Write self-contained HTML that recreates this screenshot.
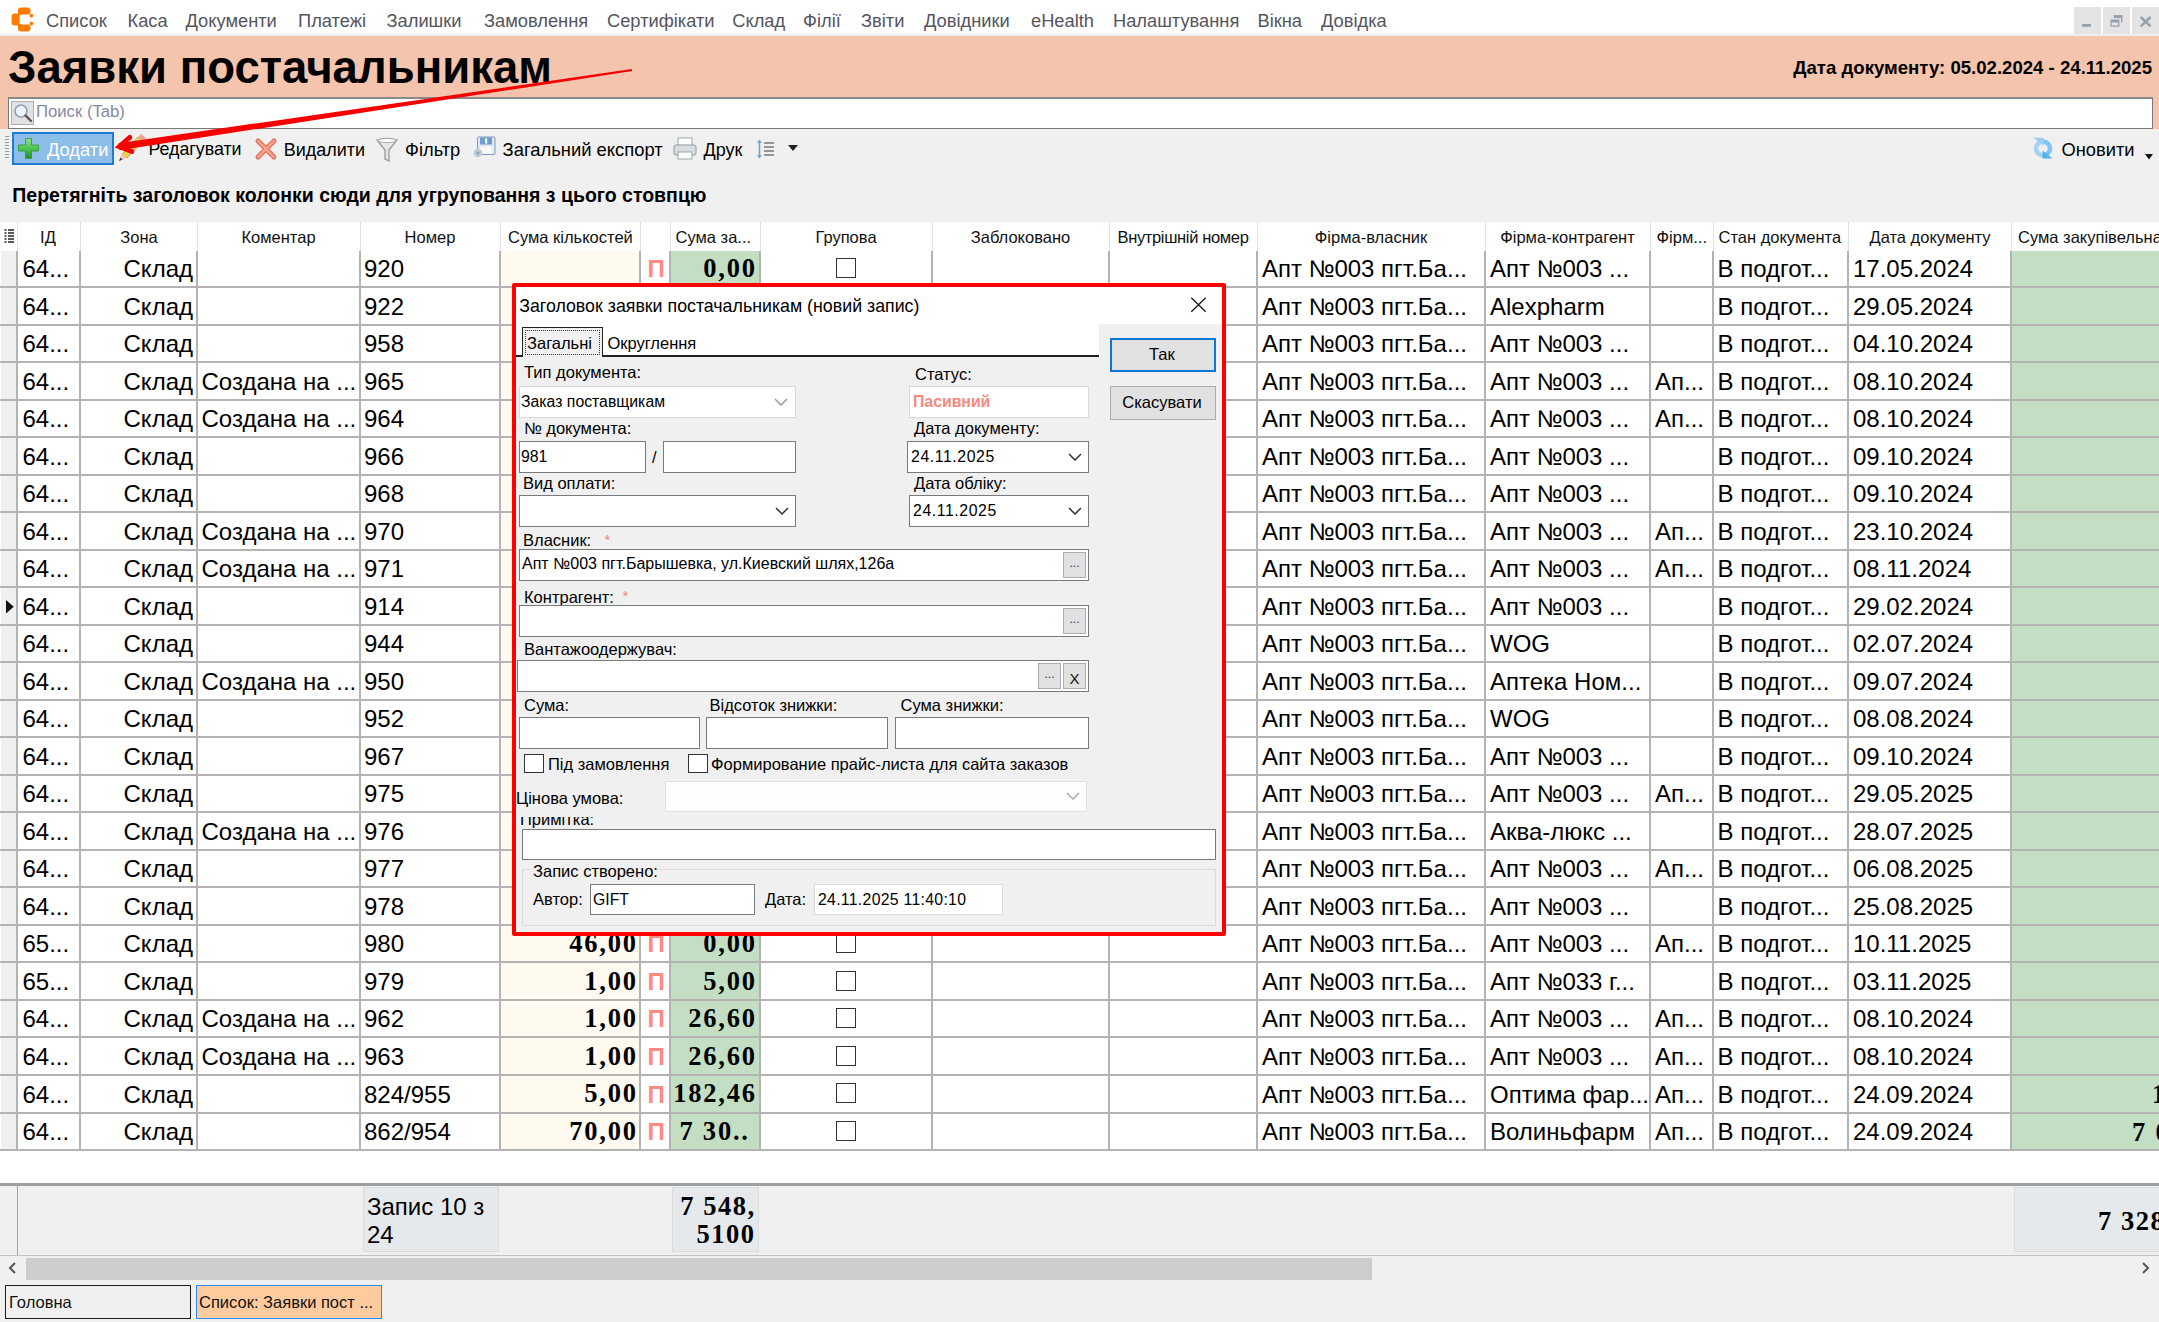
<!DOCTYPE html><html><head><meta charset="utf-8"><style>
html,body{margin:0;padding:0;}
body{width:2159px;height:1322px;overflow:hidden;position:relative;background:#f0f0f0;font-family:"Liberation Sans",sans-serif;}
.t{position:absolute;white-space:pre;}
.b{position:absolute;box-sizing:border-box;}
svg{position:absolute;}
</style></head><body>
<div class="b" style="left:0px;top:0px;width:2159px;height:34px;background:#fff;"></div>
<div class="b" style="left:0px;top:33px;width:2159px;height:3px;background:linear-gradient(#f6f6f6,#ececec);"></div>
<svg style="left:0px;top:0px" width="40" height="40" viewBox="0 0 40 40">
<rect x="18" y="7.5" width="12.5" height="7" rx="3" fill="#ff7c00"/>
<rect x="11.6" y="13.5" width="8" height="12" rx="3" fill="#ff7c00"/>
<rect x="18" y="24.5" width="12.5" height="7" rx="3" fill="#ff7c00"/>
<rect x="18" y="12" width="3" height="3" fill="#ff7c00"/>
<rect x="18" y="24" width="3" height="3" fill="#ff7c00"/>
<rect x="29.5" y="13.8" width="3.6" height="3.6" rx="1.4" fill="#ff7c00"/>
<rect x="29.5" y="21.8" width="3.6" height="3.6" rx="1.4" fill="#ff7c00"/>
</svg>
<div class="t" style="top:11.81px;font-size:18.3px;line-height:18.3px;color:#55555e;left:46px;">Список</div>
<div class="t" style="top:11.81px;font-size:18.3px;line-height:18.3px;color:#55555e;left:127.5px;">Каса</div>
<div class="t" style="top:11.81px;font-size:18.3px;line-height:18.3px;color:#55555e;left:185.5px;">Документи</div>
<div class="t" style="top:11.81px;font-size:18.3px;line-height:18.3px;color:#55555e;left:298px;">Платежі</div>
<div class="t" style="top:11.81px;font-size:18.3px;line-height:18.3px;color:#55555e;left:386.5px;">Залишки</div>
<div class="t" style="top:11.81px;font-size:18.3px;line-height:18.3px;color:#55555e;left:484px;">Замовлення</div>
<div class="t" style="top:11.81px;font-size:18.3px;line-height:18.3px;color:#55555e;left:607px;">Сертифікати</div>
<div class="t" style="top:11.81px;font-size:18.3px;line-height:18.3px;color:#55555e;left:732.3px;">Склад</div>
<div class="t" style="top:11.81px;font-size:18.3px;line-height:18.3px;color:#55555e;left:803px;">Філії</div>
<div class="t" style="top:11.81px;font-size:18.3px;line-height:18.3px;color:#55555e;left:861px;">Звіти</div>
<div class="t" style="top:11.81px;font-size:18.3px;line-height:18.3px;color:#55555e;left:924px;">Довідники</div>
<div class="t" style="top:11.81px;font-size:18.3px;line-height:18.3px;color:#55555e;left:1031px;">eHealth</div>
<div class="t" style="top:11.81px;font-size:18.3px;line-height:18.3px;color:#55555e;left:1113px;">Налаштування</div>
<div class="t" style="top:11.81px;font-size:18.3px;line-height:18.3px;color:#55555e;left:1257.5px;">Вікна</div>
<div class="t" style="top:11.81px;font-size:18.3px;line-height:18.3px;color:#55555e;left:1321px;">Довідка</div>
<div class="b" style="left:2074px;top:7px;width:27px;height:27px;background:#e4e4e4;"></div>
<div class="b" style="left:2103px;top:7px;width:27px;height:27px;background:#e4e4e4;"></div>
<div class="b" style="left:2132px;top:7px;width:27px;height:27px;background:#e4e4e4;"></div>
<svg style="left:2074px;top:7px" width="85" height="27" viewBox="0 0 85 27">
<rect x="8" y="17" width="9" height="2.8" fill="#94a3b0"/>
<rect x="39.7" y="8.1" width="8.7" height="3" fill="#94a3b0"/>
<rect x="47" y="8.1" width="1.4" height="7.4" fill="#94a3b0"/>
<rect x="36.5" y="12.5" width="8.9" height="7.3" fill="#94a3b0"/>
<rect x="37.8" y="15.5" width="6.3" height="3" fill="#e4e4e4"/>
<path d="M67.5 10.7 L75.8 18.6 M75.8 10.7 L67.5 18.6" stroke="#94a3b0" stroke-width="2.6" stroke-linecap="round"/>
</svg>
<div class="b" style="left:0px;top:36px;width:2159px;height:93px;background:#f5c4ac;"></div>
<div class="t" style="top:45.23px;font-size:45.5px;line-height:45.5px;color:#000;font-weight:bold;left:8px;">Заявки постачальникам</div>
<div class="t" style="top:59.16px;font-size:18.6px;line-height:18.6px;color:#000;font-weight:bold;left:1152px;width:1000px;text-align:right;">Дата документу: 05.02.2024 - 24.11.2025</div>
<div class="b" style="left:8px;top:97px;width:2145px;height:32px;background:#fff;border:1px solid #7a7a7a;border-top:2px solid #8a8a8a;"></div>
<div class="b" style="left:11px;top:101px;width:23px;height:24px;background:#e2e2e2;border:1px solid #adadad;"></div>
<svg style="left:12px;top:102px" width="22" height="22" viewBox="0 0 22 22">
<circle cx="9" cy="9" r="6" fill="#eef4fb" stroke="#8aa0b8" stroke-width="1.6"/>
<path d="M13.5 13.5 L19 19" stroke="#555" stroke-width="2.4" stroke-linecap="round"/>
</svg>
<div class="t" style="top:104.36px;font-size:16.7px;line-height:16.7px;color:#8688a0;left:36px;">Поиск (Tab)</div>
<div class="b" style="left:0px;top:129px;width:2159px;height:80px;background:#f0f0f0;"></div>
<div class="b" style="left:5px;top:136px;width:4px;height:24px;background:repeating-linear-gradient(#9a9a9a 0 1px,transparent 1px 3px);"></div>
<div class="b" style="left:12px;top:132px;width:102px;height:33px;background:#8dbde9;border:2px solid #1c7cd6;"></div>
<svg style="left:17px;top:137px" width="24" height="24" viewBox="0 0 24 24">
<defs><linearGradient id="pg" x1="0" y1="0" x2="0" y2="1"><stop offset="0" stop-color="#8fe08f"/><stop offset="0.55" stop-color="#4cbf4c"/><stop offset="1" stop-color="#1d8a1d"/></linearGradient></defs>
<path d="M8.5 1.5 H14.5 V8 H21.5 V14 H14.5 V21.5 H8.5 V14 H1.5 V8 H8.5 Z" fill="url(#pg)" stroke="#2a9a2a" stroke-width="0.8" stroke-linejoin="round"/>
</svg>
<div class="t" style="top:141.01px;font-size:18.3px;line-height:18.3px;color:#fff;left:47px;">Додати</div>
<svg style="left:112px;top:127.5px" width="34" height="36" viewBox="0 0 34 36">
<path d="M10 26 L26 9 L31 13 L15 30 Z" fill="#f0cf4a" stroke="#c8a030" stroke-width="0.8"/>
<path d="M26 9 L29 6 L34 10 L31 13 Z" fill="#f3a0a0"/>
<path d="M10 26 L15 30 L7 33 Z" fill="#f6c8b0"/>
<path d="M7 33 L8.5 29.5 L10.5 31.5 Z" fill="#333"/>
</svg>
<div class="t" style="top:141.43px;font-size:17.8px;line-height:17.8px;color:#000;left:148.5px;">Редагувати</div>
<svg style="left:254px;top:137px" width="24" height="24" viewBox="0 0 24 24">
<path d="M4 4 L20 20 M20 4 L4 20" stroke="#e3705a" stroke-width="5" stroke-linecap="round"/>
<path d="M4 4 L20 20 M20 4 L4 20" stroke="#f7a08c" stroke-width="2.5" stroke-linecap="round"/>
</svg>
<div class="t" style="top:141.26px;font-size:18px;line-height:18px;color:#000;left:283.7px;">Видалити</div>
<svg style="left:375px;top:137px" width="24" height="26" viewBox="0 0 24 26">
<path d="M2 3 Q12 0 22 3 L14 13 V24 L10 22 V13 Z" fill="#e6e6e6" stroke="#9a9a9a" stroke-width="1.3"/>
<ellipse cx="12" cy="3.5" rx="9" ry="2" fill="#fff" stroke="#aaa" stroke-width="1"/>
</svg>
<div class="t" style="top:141.01px;font-size:18.3px;line-height:18.3px;color:#000;left:405px;">Фільтр</div>
<svg style="left:472px;top:135px" width="26" height="26" viewBox="0 0 26 26">
<rect x="5.5" y="2" width="17.5" height="17.5" rx="1" fill="#dfe8f0" stroke="#7e9cc0" stroke-width="1"/>
<rect x="8" y="2.5" width="12" height="7" fill="#6f9bd0"/>
<rect x="13" y="3.5" width="2.2" height="5" fill="#f4f8fc"/>
<rect x="8" y="11.5" width="12.5" height="7" fill="#f8f8f8"/>
<circle cx="6" cy="18" r="4.3" fill="#c2cad2"/>
<circle cx="6" cy="18" r="1.6" fill="#8aa4c0"/>
</svg>
<div class="t" style="top:140.92px;font-size:18.4px;line-height:18.4px;color:#000;left:502.6px;">Загальний експорт</div>
<svg style="left:672px;top:137px" width="26" height="24" viewBox="0 0 26 24">
<rect x="6" y="1" width="14" height="8" fill="#fff" stroke="#9aa" stroke-width="1"/>
<rect x="2" y="8" width="22" height="10" rx="2" fill="#d8dde2" stroke="#8a96a0" stroke-width="1"/>
<rect x="6" y="15" width="14" height="7" fill="#fff" stroke="#9aa" stroke-width="1"/>
</svg>
<div class="t" style="top:141.26px;font-size:18px;line-height:18px;color:#000;left:703.5px;">Друк</div>
<svg style="left:757px;top:139px" width="20" height="20" viewBox="0 0 20 20">
<path d="M2.5 2 V18" stroke="#6aa0d8" stroke-width="1.5"/>
<path d="M0.5 4 L2.5 1.5 L4.5 4 M0.5 16 L2.5 18.5 L4.5 16" stroke="#6aa0d8" stroke-width="1.2" fill="none"/>
<path d="M7 4 H17 M7 8 H17 M7 12 H17 M7 16 H17" stroke="#777" stroke-width="1.3"/>
</svg>
<svg style="left:788px;top:145px" width="10" height="6" viewBox="0 0 10 6"><path d="M0 0 H10 L5 6 Z" fill="#222"/></svg>
<svg style="left:2031px;top:137px" width="24" height="24" viewBox="0 0 24 24">
<path d="M12 4.5 A7 7 0 0 0 12 18.5" stroke="#a8d2f4" stroke-width="4.5" fill="none"/>
<path d="M12 4.5 A7 7 0 0 1 12 18.5" stroke="#7cc4f4" stroke-width="4.5" fill="none"/>
<path d="M2.5 0.8 L12.5 0.8 L12.5 9 Z" fill="#9ccdf4"/>
<path d="M21.5 21.5 L11.5 21.5 L11.5 13.5 Z" fill="#52b2f0"/>
</svg>
<div class="t" style="top:140.81px;font-size:18.3px;line-height:18.3px;color:#000;left:2061.5px;">Оновити</div>
<svg style="left:2145px;top:154px" width="8" height="5.5" viewBox="0 0 8 5.5"><path d="M0 0 H8 L4 5.5 Z" fill="#111"/></svg>
<div class="t" style="top:185.99px;font-size:19.5px;line-height:19.5px;color:#000;font-weight:bold;left:12.3px;">Перетягніть заголовок колонки сюди для угруповання з цього стовпцю</div>
<div class="b" style="left:0px;top:222px;width:2159px;height:29px;background:#fff;"></div>
<div class="b" style="left:0px;top:251px;width:2159px;height:933px;background:#fff;"></div>
<div class="b" style="left:1px;top:251px;width:16px;height:899px;background:#f0f0f0;"></div>
<div class="b" style="left:500px;top:251px;width:140px;height:899px;background:#fefaf0;"></div>
<div class="b" style="left:670px;top:251px;width:90px;height:899px;background:#c4dec4;"></div>
<div class="b" style="left:2012px;top:251px;width:147px;height:899px;background:#c4dec4;"></div>
<div class="b" style="left:16.5px;top:222px;width:1.2px;height:29px;background:#e2e2e2;"></div>
<div class="b" style="left:79.5px;top:222px;width:1.2px;height:29px;background:#e2e2e2;"></div>
<div class="b" style="left:196.5px;top:222px;width:1.2px;height:29px;background:#e2e2e2;"></div>
<div class="b" style="left:359.5px;top:222px;width:1.2px;height:29px;background:#e2e2e2;"></div>
<div class="b" style="left:499.5px;top:222px;width:1.2px;height:29px;background:#e2e2e2;"></div>
<div class="b" style="left:639.5px;top:222px;width:1.2px;height:29px;background:#e2e2e2;"></div>
<div class="b" style="left:669.5px;top:222px;width:1.2px;height:29px;background:#e2e2e2;"></div>
<div class="b" style="left:759.5px;top:222px;width:1.2px;height:29px;background:#e2e2e2;"></div>
<div class="b" style="left:931.5px;top:222px;width:1.2px;height:29px;background:#e2e2e2;"></div>
<div class="b" style="left:1108.5px;top:222px;width:1.2px;height:29px;background:#e2e2e2;"></div>
<div class="b" style="left:1256.5px;top:222px;width:1.2px;height:29px;background:#e2e2e2;"></div>
<div class="b" style="left:1484.5px;top:222px;width:1.2px;height:29px;background:#e2e2e2;"></div>
<div class="b" style="left:1649.5px;top:222px;width:1.2px;height:29px;background:#e2e2e2;"></div>
<div class="b" style="left:1712.5px;top:222px;width:1.2px;height:29px;background:#e2e2e2;"></div>
<div class="b" style="left:1847.5px;top:222px;width:1.2px;height:29px;background:#e2e2e2;"></div>
<div class="b" style="left:2011.0px;top:222px;width:1.2px;height:29px;background:#e2e2e2;"></div>
<svg style="left:4px;top:229px" width="10" height="14" viewBox="0 0 10 14">
<path d="M0.5 1h2M0.5 4h2M0.5 7h2M0.5 10h2M0.5 13h2" stroke="#222" stroke-width="1.4"/>
<path d="M4 1h6M4 4h6M4 7h6M4 10h6M4 13h6" stroke="#222" stroke-width="1.4"/>
</svg>
<div class="t" style="top:228.93px;font-size:16.5px;line-height:16.5px;color:#111;left:-952px;width:2000px;text-align:center;">ІД</div>
<div class="t" style="top:228.93px;font-size:16.5px;line-height:16.5px;color:#111;left:-861px;width:2000px;text-align:center;">Зона</div>
<div class="t" style="top:228.93px;font-size:16.5px;line-height:16.5px;color:#111;left:-721.5px;width:2000px;text-align:center;">Коментар</div>
<div class="t" style="top:228.93px;font-size:16.5px;line-height:16.5px;color:#111;left:-570px;width:2000px;text-align:center;">Номер</div>
<div class="t" style="top:228.93px;font-size:16.5px;line-height:16.5px;color:#111;left:508px;">Сума кількостей</div>
<div class="t" style="top:228.93px;font-size:16.5px;line-height:16.5px;color:#111;left:675.5px;">Сума за...</div>
<div class="t" style="top:228.93px;font-size:16.5px;line-height:16.5px;color:#111;left:-154px;width:2000px;text-align:center;">Групова</div>
<div class="t" style="top:228.93px;font-size:16.5px;line-height:16.5px;color:#111;left:20.5px;width:2000px;text-align:center;">Заблоковано</div>
<div class="t" style="top:228.93px;font-size:16.5px;line-height:16.5px;color:#111;letter-spacing:-0.35px;left:1117.5px;">Внутрішній номер</div>
<div class="t" style="top:228.93px;font-size:16.5px;line-height:16.5px;color:#111;left:371px;width:2000px;text-align:center;">Фірма-власник</div>
<div class="t" style="top:228.93px;font-size:16.5px;line-height:16.5px;color:#111;left:567.5px;width:2000px;text-align:center;">Фірма-контрагент</div>
<div class="t" style="top:228.93px;font-size:16.5px;line-height:16.5px;color:#111;left:1656.5px;">Фірм...</div>
<div class="t" style="top:228.93px;font-size:16.5px;line-height:16.5px;color:#111;left:1718.5px;">Стан документа</div>
<div class="t" style="top:228.93px;font-size:16.5px;line-height:16.5px;color:#111;left:930px;width:2000px;text-align:center;">Дата документу</div>
<div class="t" style="top:228.93px;font-size:16.5px;line-height:16.5px;color:#111;left:2018px;">Сума закупівельна</div>
<div class="t" style="top:257.08px;font-size:24px;line-height:24px;color:#000;left:22.5px;">64...</div>
<div class="t" style="top:257.08px;font-size:24px;line-height:24px;color:#000;left:-807px;width:1000px;text-align:right;">Склад</div>
<div class="t" style="top:257.08px;font-size:24px;line-height:24px;color:#000;left:364px;">920</div>
<div class="t" style="top:257.08px;font-size:24px;line-height:24px;color:#ff8a80;font-weight:bold;left:647.5px;">П</div>
<div class="t" style="top:254.91px;font-size:26.5px;line-height:26.5px;color:#000;font-weight:bold;letter-spacing:1.8px;font-family:'Liberation Serif',serif;left:-243.20000000000005px;width:1000px;text-align:right;">0,00</div>
<div class="b" style="left:835.5px;top:258px;width:20px;height:20px;border:1.8px solid #333;background:#fff;"></div>
<div class="t" style="top:257.08px;font-size:24px;line-height:24px;color:#000;left:1262px;">Апт №003 пгт.Ба...</div>
<div class="t" style="top:257.08px;font-size:24px;line-height:24px;color:#000;left:1490px;">Апт №003 ...</div>
<div class="t" style="top:257.08px;font-size:24px;line-height:24px;color:#000;left:1717.5px;">В подгот...</div>
<div class="t" style="top:257.08px;font-size:24px;line-height:24px;color:#000;left:1853px;">17.05.2024</div>
<div class="t" style="top:294.60px;font-size:24px;line-height:24px;color:#000;left:22.5px;">64...</div>
<div class="t" style="top:294.60px;font-size:24px;line-height:24px;color:#000;left:-807px;width:1000px;text-align:right;">Склад</div>
<div class="t" style="top:294.60px;font-size:24px;line-height:24px;color:#000;left:364px;">922</div>
<div class="t" style="top:294.60px;font-size:24px;line-height:24px;color:#ff8a80;font-weight:bold;left:647.5px;">П</div>
<div class="b" style="left:835.5px;top:296px;width:20px;height:20px;border:1.8px solid #333;background:#fff;"></div>
<div class="t" style="top:294.60px;font-size:24px;line-height:24px;color:#000;left:1262px;">Апт №003 пгт.Ба...</div>
<div class="t" style="top:294.60px;font-size:24px;line-height:24px;color:#000;left:1490px;">Alexpharm</div>
<div class="t" style="top:294.60px;font-size:24px;line-height:24px;color:#000;left:1717.5px;">В подгот...</div>
<div class="t" style="top:294.60px;font-size:24px;line-height:24px;color:#000;left:1853px;">29.05.2024</div>
<div class="t" style="top:332.12px;font-size:24px;line-height:24px;color:#000;left:22.5px;">64...</div>
<div class="t" style="top:332.12px;font-size:24px;line-height:24px;color:#000;left:-807px;width:1000px;text-align:right;">Склад</div>
<div class="t" style="top:332.12px;font-size:24px;line-height:24px;color:#000;left:364px;">958</div>
<div class="t" style="top:332.12px;font-size:24px;line-height:24px;color:#ff8a80;font-weight:bold;left:647.5px;">П</div>
<div class="b" style="left:835.5px;top:333px;width:20px;height:20px;border:1.8px solid #333;background:#fff;"></div>
<div class="t" style="top:332.12px;font-size:24px;line-height:24px;color:#000;left:1262px;">Апт №003 пгт.Ба...</div>
<div class="t" style="top:332.12px;font-size:24px;line-height:24px;color:#000;left:1490px;">Апт №003 ...</div>
<div class="t" style="top:332.12px;font-size:24px;line-height:24px;color:#000;left:1717.5px;">В подгот...</div>
<div class="t" style="top:332.12px;font-size:24px;line-height:24px;color:#000;left:1853px;">04.10.2024</div>
<div class="t" style="top:369.64px;font-size:24px;line-height:24px;color:#000;left:22.5px;">64...</div>
<div class="t" style="top:369.64px;font-size:24px;line-height:24px;color:#000;left:-807px;width:1000px;text-align:right;">Склад</div>
<div class="t" style="top:369.64px;font-size:24px;line-height:24px;color:#000;left:201.5px;">Создана на ...</div>
<div class="t" style="top:369.64px;font-size:24px;line-height:24px;color:#000;left:364px;">965</div>
<div class="t" style="top:369.64px;font-size:24px;line-height:24px;color:#ff8a80;font-weight:bold;left:647.5px;">П</div>
<div class="b" style="left:835.5px;top:371px;width:20px;height:20px;border:1.8px solid #333;background:#fff;"></div>
<div class="t" style="top:369.64px;font-size:24px;line-height:24px;color:#000;left:1262px;">Апт №003 пгт.Ба...</div>
<div class="t" style="top:369.64px;font-size:24px;line-height:24px;color:#000;left:1490px;">Апт №003 ...</div>
<div class="t" style="top:369.64px;font-size:24px;line-height:24px;color:#000;left:1655px;">Ап...</div>
<div class="t" style="top:369.64px;font-size:24px;line-height:24px;color:#000;left:1717.5px;">В подгот...</div>
<div class="t" style="top:369.64px;font-size:24px;line-height:24px;color:#000;left:1853px;">08.10.2024</div>
<div class="t" style="top:407.16px;font-size:24px;line-height:24px;color:#000;left:22.5px;">64...</div>
<div class="t" style="top:407.16px;font-size:24px;line-height:24px;color:#000;left:-807px;width:1000px;text-align:right;">Склад</div>
<div class="t" style="top:407.16px;font-size:24px;line-height:24px;color:#000;left:201.5px;">Создана на ...</div>
<div class="t" style="top:407.16px;font-size:24px;line-height:24px;color:#000;left:364px;">964</div>
<div class="t" style="top:407.16px;font-size:24px;line-height:24px;color:#ff8a80;font-weight:bold;left:647.5px;">П</div>
<div class="b" style="left:835.5px;top:408px;width:20px;height:20px;border:1.8px solid #333;background:#fff;"></div>
<div class="t" style="top:407.16px;font-size:24px;line-height:24px;color:#000;left:1262px;">Апт №003 пгт.Ба...</div>
<div class="t" style="top:407.16px;font-size:24px;line-height:24px;color:#000;left:1490px;">Апт №003 ...</div>
<div class="t" style="top:407.16px;font-size:24px;line-height:24px;color:#000;left:1655px;">Ап...</div>
<div class="t" style="top:407.16px;font-size:24px;line-height:24px;color:#000;left:1717.5px;">В подгот...</div>
<div class="t" style="top:407.16px;font-size:24px;line-height:24px;color:#000;left:1853px;">08.10.2024</div>
<div class="t" style="top:444.68px;font-size:24px;line-height:24px;color:#000;left:22.5px;">64...</div>
<div class="t" style="top:444.68px;font-size:24px;line-height:24px;color:#000;left:-807px;width:1000px;text-align:right;">Склад</div>
<div class="t" style="top:444.68px;font-size:24px;line-height:24px;color:#000;left:364px;">966</div>
<div class="t" style="top:444.68px;font-size:24px;line-height:24px;color:#ff8a80;font-weight:bold;left:647.5px;">П</div>
<div class="b" style="left:835.5px;top:446px;width:20px;height:20px;border:1.8px solid #333;background:#fff;"></div>
<div class="t" style="top:444.68px;font-size:24px;line-height:24px;color:#000;left:1262px;">Апт №003 пгт.Ба...</div>
<div class="t" style="top:444.68px;font-size:24px;line-height:24px;color:#000;left:1490px;">Апт №003 ...</div>
<div class="t" style="top:444.68px;font-size:24px;line-height:24px;color:#000;left:1717.5px;">В подгот...</div>
<div class="t" style="top:444.68px;font-size:24px;line-height:24px;color:#000;left:1853px;">09.10.2024</div>
<div class="t" style="top:482.20px;font-size:24px;line-height:24px;color:#000;left:22.5px;">64...</div>
<div class="t" style="top:482.20px;font-size:24px;line-height:24px;color:#000;left:-807px;width:1000px;text-align:right;">Склад</div>
<div class="t" style="top:482.20px;font-size:24px;line-height:24px;color:#000;left:364px;">968</div>
<div class="t" style="top:482.20px;font-size:24px;line-height:24px;color:#ff8a80;font-weight:bold;left:647.5px;">П</div>
<div class="b" style="left:835.5px;top:483px;width:20px;height:20px;border:1.8px solid #333;background:#fff;"></div>
<div class="t" style="top:482.20px;font-size:24px;line-height:24px;color:#000;left:1262px;">Апт №003 пгт.Ба...</div>
<div class="t" style="top:482.20px;font-size:24px;line-height:24px;color:#000;left:1490px;">Апт №003 ...</div>
<div class="t" style="top:482.20px;font-size:24px;line-height:24px;color:#000;left:1717.5px;">В подгот...</div>
<div class="t" style="top:482.20px;font-size:24px;line-height:24px;color:#000;left:1853px;">09.10.2024</div>
<div class="t" style="top:519.72px;font-size:24px;line-height:24px;color:#000;left:22.5px;">64...</div>
<div class="t" style="top:519.72px;font-size:24px;line-height:24px;color:#000;left:-807px;width:1000px;text-align:right;">Склад</div>
<div class="t" style="top:519.72px;font-size:24px;line-height:24px;color:#000;left:201.5px;">Создана на ...</div>
<div class="t" style="top:519.72px;font-size:24px;line-height:24px;color:#000;left:364px;">970</div>
<div class="t" style="top:519.72px;font-size:24px;line-height:24px;color:#ff8a80;font-weight:bold;left:647.5px;">П</div>
<div class="b" style="left:835.5px;top:521px;width:20px;height:20px;border:1.8px solid #333;background:#fff;"></div>
<div class="t" style="top:519.72px;font-size:24px;line-height:24px;color:#000;left:1262px;">Апт №003 пгт.Ба...</div>
<div class="t" style="top:519.72px;font-size:24px;line-height:24px;color:#000;left:1490px;">Апт №003 ...</div>
<div class="t" style="top:519.72px;font-size:24px;line-height:24px;color:#000;left:1655px;">Ап...</div>
<div class="t" style="top:519.72px;font-size:24px;line-height:24px;color:#000;left:1717.5px;">В подгот...</div>
<div class="t" style="top:519.72px;font-size:24px;line-height:24px;color:#000;left:1853px;">23.10.2024</div>
<div class="t" style="top:557.24px;font-size:24px;line-height:24px;color:#000;left:22.5px;">64...</div>
<div class="t" style="top:557.24px;font-size:24px;line-height:24px;color:#000;left:-807px;width:1000px;text-align:right;">Склад</div>
<div class="t" style="top:557.24px;font-size:24px;line-height:24px;color:#000;left:201.5px;">Создана на ...</div>
<div class="t" style="top:557.24px;font-size:24px;line-height:24px;color:#000;left:364px;">971</div>
<div class="t" style="top:557.24px;font-size:24px;line-height:24px;color:#ff8a80;font-weight:bold;left:647.5px;">П</div>
<div class="b" style="left:835.5px;top:558px;width:20px;height:20px;border:1.8px solid #333;background:#fff;"></div>
<div class="t" style="top:557.24px;font-size:24px;line-height:24px;color:#000;left:1262px;">Апт №003 пгт.Ба...</div>
<div class="t" style="top:557.24px;font-size:24px;line-height:24px;color:#000;left:1490px;">Апт №003 ...</div>
<div class="t" style="top:557.24px;font-size:24px;line-height:24px;color:#000;left:1655px;">Ап...</div>
<div class="t" style="top:557.24px;font-size:24px;line-height:24px;color:#000;left:1717.5px;">В подгот...</div>
<div class="t" style="top:557.24px;font-size:24px;line-height:24px;color:#000;left:1853px;">08.11.2024</div>
<div class="t" style="top:594.76px;font-size:24px;line-height:24px;color:#000;left:22.5px;">64...</div>
<div class="t" style="top:594.76px;font-size:24px;line-height:24px;color:#000;left:-807px;width:1000px;text-align:right;">Склад</div>
<div class="t" style="top:594.76px;font-size:24px;line-height:24px;color:#000;left:364px;">914</div>
<div class="t" style="top:594.76px;font-size:24px;line-height:24px;color:#ff8a80;font-weight:bold;left:647.5px;">П</div>
<div class="b" style="left:835.5px;top:596px;width:20px;height:20px;border:1.8px solid #333;background:#fff;"></div>
<div class="t" style="top:594.76px;font-size:24px;line-height:24px;color:#000;left:1262px;">Апт №003 пгт.Ба...</div>
<div class="t" style="top:594.76px;font-size:24px;line-height:24px;color:#000;left:1490px;">Апт №003 ...</div>
<div class="t" style="top:594.76px;font-size:24px;line-height:24px;color:#000;left:1717.5px;">В подгот...</div>
<div class="t" style="top:594.76px;font-size:24px;line-height:24px;color:#000;left:1853px;">29.02.2024</div>
<div class="t" style="top:632.28px;font-size:24px;line-height:24px;color:#000;left:22.5px;">64...</div>
<div class="t" style="top:632.28px;font-size:24px;line-height:24px;color:#000;left:-807px;width:1000px;text-align:right;">Склад</div>
<div class="t" style="top:632.28px;font-size:24px;line-height:24px;color:#000;left:364px;">944</div>
<div class="t" style="top:632.28px;font-size:24px;line-height:24px;color:#ff8a80;font-weight:bold;left:647.5px;">П</div>
<div class="b" style="left:835.5px;top:633px;width:20px;height:20px;border:1.8px solid #333;background:#fff;"></div>
<div class="t" style="top:632.28px;font-size:24px;line-height:24px;color:#000;left:1262px;">Апт №003 пгт.Ба...</div>
<div class="t" style="top:632.28px;font-size:24px;line-height:24px;color:#000;left:1490px;">WOG</div>
<div class="t" style="top:632.28px;font-size:24px;line-height:24px;color:#000;left:1717.5px;">В подгот...</div>
<div class="t" style="top:632.28px;font-size:24px;line-height:24px;color:#000;left:1853px;">02.07.2024</div>
<div class="t" style="top:669.80px;font-size:24px;line-height:24px;color:#000;left:22.5px;">64...</div>
<div class="t" style="top:669.80px;font-size:24px;line-height:24px;color:#000;left:-807px;width:1000px;text-align:right;">Склад</div>
<div class="t" style="top:669.80px;font-size:24px;line-height:24px;color:#000;left:201.5px;">Создана на ...</div>
<div class="t" style="top:669.80px;font-size:24px;line-height:24px;color:#000;left:364px;">950</div>
<div class="t" style="top:669.80px;font-size:24px;line-height:24px;color:#ff8a80;font-weight:bold;left:647.5px;">П</div>
<div class="b" style="left:835.5px;top:671px;width:20px;height:20px;border:1.8px solid #333;background:#fff;"></div>
<div class="t" style="top:669.80px;font-size:24px;line-height:24px;color:#000;left:1262px;">Апт №003 пгт.Ба...</div>
<div class="t" style="top:669.80px;font-size:24px;line-height:24px;color:#000;left:1490px;">Аптека Ном...</div>
<div class="t" style="top:669.80px;font-size:24px;line-height:24px;color:#000;left:1717.5px;">В подгот...</div>
<div class="t" style="top:669.80px;font-size:24px;line-height:24px;color:#000;left:1853px;">09.07.2024</div>
<div class="t" style="top:707.32px;font-size:24px;line-height:24px;color:#000;left:22.5px;">64...</div>
<div class="t" style="top:707.32px;font-size:24px;line-height:24px;color:#000;left:-807px;width:1000px;text-align:right;">Склад</div>
<div class="t" style="top:707.32px;font-size:24px;line-height:24px;color:#000;left:364px;">952</div>
<div class="t" style="top:707.32px;font-size:24px;line-height:24px;color:#ff8a80;font-weight:bold;left:647.5px;">П</div>
<div class="b" style="left:835.5px;top:708px;width:20px;height:20px;border:1.8px solid #333;background:#fff;"></div>
<div class="t" style="top:707.32px;font-size:24px;line-height:24px;color:#000;left:1262px;">Апт №003 пгт.Ба...</div>
<div class="t" style="top:707.32px;font-size:24px;line-height:24px;color:#000;left:1490px;">WOG</div>
<div class="t" style="top:707.32px;font-size:24px;line-height:24px;color:#000;left:1717.5px;">В подгот...</div>
<div class="t" style="top:707.32px;font-size:24px;line-height:24px;color:#000;left:1853px;">08.08.2024</div>
<div class="t" style="top:744.84px;font-size:24px;line-height:24px;color:#000;left:22.5px;">64...</div>
<div class="t" style="top:744.84px;font-size:24px;line-height:24px;color:#000;left:-807px;width:1000px;text-align:right;">Склад</div>
<div class="t" style="top:744.84px;font-size:24px;line-height:24px;color:#000;left:364px;">967</div>
<div class="t" style="top:744.84px;font-size:24px;line-height:24px;color:#ff8a80;font-weight:bold;left:647.5px;">П</div>
<div class="b" style="left:835.5px;top:746px;width:20px;height:20px;border:1.8px solid #333;background:#fff;"></div>
<div class="t" style="top:744.84px;font-size:24px;line-height:24px;color:#000;left:1262px;">Апт №003 пгт.Ба...</div>
<div class="t" style="top:744.84px;font-size:24px;line-height:24px;color:#000;left:1490px;">Апт №003 ...</div>
<div class="t" style="top:744.84px;font-size:24px;line-height:24px;color:#000;left:1717.5px;">В подгот...</div>
<div class="t" style="top:744.84px;font-size:24px;line-height:24px;color:#000;left:1853px;">09.10.2024</div>
<div class="t" style="top:782.36px;font-size:24px;line-height:24px;color:#000;left:22.5px;">64...</div>
<div class="t" style="top:782.36px;font-size:24px;line-height:24px;color:#000;left:-807px;width:1000px;text-align:right;">Склад</div>
<div class="t" style="top:782.36px;font-size:24px;line-height:24px;color:#000;left:364px;">975</div>
<div class="t" style="top:782.36px;font-size:24px;line-height:24px;color:#ff8a80;font-weight:bold;left:647.5px;">П</div>
<div class="b" style="left:835.5px;top:783px;width:20px;height:20px;border:1.8px solid #333;background:#fff;"></div>
<div class="t" style="top:782.36px;font-size:24px;line-height:24px;color:#000;left:1262px;">Апт №003 пгт.Ба...</div>
<div class="t" style="top:782.36px;font-size:24px;line-height:24px;color:#000;left:1490px;">Апт №003 ...</div>
<div class="t" style="top:782.36px;font-size:24px;line-height:24px;color:#000;left:1655px;">Ап...</div>
<div class="t" style="top:782.36px;font-size:24px;line-height:24px;color:#000;left:1717.5px;">В подгот...</div>
<div class="t" style="top:782.36px;font-size:24px;line-height:24px;color:#000;left:1853px;">29.05.2025</div>
<div class="t" style="top:819.88px;font-size:24px;line-height:24px;color:#000;left:22.5px;">64...</div>
<div class="t" style="top:819.88px;font-size:24px;line-height:24px;color:#000;left:-807px;width:1000px;text-align:right;">Склад</div>
<div class="t" style="top:819.88px;font-size:24px;line-height:24px;color:#000;left:201.5px;">Создана на ...</div>
<div class="t" style="top:819.88px;font-size:24px;line-height:24px;color:#000;left:364px;">976</div>
<div class="t" style="top:819.88px;font-size:24px;line-height:24px;color:#ff8a80;font-weight:bold;left:647.5px;">П</div>
<div class="b" style="left:835.5px;top:821px;width:20px;height:20px;border:1.8px solid #333;background:#fff;"></div>
<div class="t" style="top:819.88px;font-size:24px;line-height:24px;color:#000;left:1262px;">Апт №003 пгт.Ба...</div>
<div class="t" style="top:819.88px;font-size:24px;line-height:24px;color:#000;left:1490px;">Аква-люкс ...</div>
<div class="t" style="top:819.88px;font-size:24px;line-height:24px;color:#000;left:1717.5px;">В подгот...</div>
<div class="t" style="top:819.88px;font-size:24px;line-height:24px;color:#000;left:1853px;">28.07.2025</div>
<div class="t" style="top:857.40px;font-size:24px;line-height:24px;color:#000;left:22.5px;">64...</div>
<div class="t" style="top:857.40px;font-size:24px;line-height:24px;color:#000;left:-807px;width:1000px;text-align:right;">Склад</div>
<div class="t" style="top:857.40px;font-size:24px;line-height:24px;color:#000;left:364px;">977</div>
<div class="t" style="top:857.40px;font-size:24px;line-height:24px;color:#ff8a80;font-weight:bold;left:647.5px;">П</div>
<div class="b" style="left:835.5px;top:858px;width:20px;height:20px;border:1.8px solid #333;background:#fff;"></div>
<div class="t" style="top:857.40px;font-size:24px;line-height:24px;color:#000;left:1262px;">Апт №003 пгт.Ба...</div>
<div class="t" style="top:857.40px;font-size:24px;line-height:24px;color:#000;left:1490px;">Апт №003 ...</div>
<div class="t" style="top:857.40px;font-size:24px;line-height:24px;color:#000;left:1655px;">Ап...</div>
<div class="t" style="top:857.40px;font-size:24px;line-height:24px;color:#000;left:1717.5px;">В подгот...</div>
<div class="t" style="top:857.40px;font-size:24px;line-height:24px;color:#000;left:1853px;">06.08.2025</div>
<div class="t" style="top:894.92px;font-size:24px;line-height:24px;color:#000;left:22.5px;">64...</div>
<div class="t" style="top:894.92px;font-size:24px;line-height:24px;color:#000;left:-807px;width:1000px;text-align:right;">Склад</div>
<div class="t" style="top:894.92px;font-size:24px;line-height:24px;color:#000;left:364px;">978</div>
<div class="t" style="top:894.92px;font-size:24px;line-height:24px;color:#ff8a80;font-weight:bold;left:647.5px;">П</div>
<div class="b" style="left:835.5px;top:896px;width:20px;height:20px;border:1.8px solid #333;background:#fff;"></div>
<div class="t" style="top:894.92px;font-size:24px;line-height:24px;color:#000;left:1262px;">Апт №003 пгт.Ба...</div>
<div class="t" style="top:894.92px;font-size:24px;line-height:24px;color:#000;left:1490px;">Апт №003 ...</div>
<div class="t" style="top:894.92px;font-size:24px;line-height:24px;color:#000;left:1717.5px;">В подгот...</div>
<div class="t" style="top:894.92px;font-size:24px;line-height:24px;color:#000;left:1853px;">25.08.2025</div>
<div class="t" style="top:932.44px;font-size:24px;line-height:24px;color:#000;left:22.5px;">65...</div>
<div class="t" style="top:932.44px;font-size:24px;line-height:24px;color:#000;left:-807px;width:1000px;text-align:right;">Склад</div>
<div class="t" style="top:932.44px;font-size:24px;line-height:24px;color:#000;left:364px;">980</div>
<div class="t" style="top:930.27px;font-size:26.5px;line-height:26.5px;color:#000;font-weight:bold;letter-spacing:1.8px;font-family:'Liberation Serif',serif;left:-362.20000000000005px;width:1000px;text-align:right;">46,00</div>
<div class="t" style="top:932.44px;font-size:24px;line-height:24px;color:#ff8a80;font-weight:bold;left:647.5px;">П</div>
<div class="t" style="top:930.27px;font-size:26.5px;line-height:26.5px;color:#000;font-weight:bold;letter-spacing:1.8px;font-family:'Liberation Serif',serif;left:-243.20000000000005px;width:1000px;text-align:right;">0,00</div>
<div class="b" style="left:835.5px;top:933px;width:20px;height:20px;border:1.8px solid #333;background:#fff;"></div>
<div class="t" style="top:932.44px;font-size:24px;line-height:24px;color:#000;left:1262px;">Апт №003 пгт.Ба...</div>
<div class="t" style="top:932.44px;font-size:24px;line-height:24px;color:#000;left:1490px;">Апт №003 ...</div>
<div class="t" style="top:932.44px;font-size:24px;line-height:24px;color:#000;left:1655px;">Ап...</div>
<div class="t" style="top:932.44px;font-size:24px;line-height:24px;color:#000;left:1717.5px;">В подгот...</div>
<div class="t" style="top:932.44px;font-size:24px;line-height:24px;color:#000;left:1853px;">10.11.2025</div>
<div class="t" style="top:969.96px;font-size:24px;line-height:24px;color:#000;left:22.5px;">65...</div>
<div class="t" style="top:969.96px;font-size:24px;line-height:24px;color:#000;left:-807px;width:1000px;text-align:right;">Склад</div>
<div class="t" style="top:969.96px;font-size:24px;line-height:24px;color:#000;left:364px;">979</div>
<div class="t" style="top:967.79px;font-size:26.5px;line-height:26.5px;color:#000;font-weight:bold;letter-spacing:1.8px;font-family:'Liberation Serif',serif;left:-362.20000000000005px;width:1000px;text-align:right;">1,00</div>
<div class="t" style="top:969.96px;font-size:24px;line-height:24px;color:#ff8a80;font-weight:bold;left:647.5px;">П</div>
<div class="t" style="top:967.79px;font-size:26.5px;line-height:26.5px;color:#000;font-weight:bold;letter-spacing:1.8px;font-family:'Liberation Serif',serif;left:-243.20000000000005px;width:1000px;text-align:right;">5,00</div>
<div class="b" style="left:835.5px;top:971px;width:20px;height:20px;border:1.8px solid #333;background:#fff;"></div>
<div class="t" style="top:969.96px;font-size:24px;line-height:24px;color:#000;left:1262px;">Апт №003 пгт.Ба...</div>
<div class="t" style="top:969.96px;font-size:24px;line-height:24px;color:#000;left:1490px;">Апт №033 г...</div>
<div class="t" style="top:969.96px;font-size:24px;line-height:24px;color:#000;left:1717.5px;">В подгот...</div>
<div class="t" style="top:969.96px;font-size:24px;line-height:24px;color:#000;left:1853px;">03.11.2025</div>
<div class="t" style="top:1007.48px;font-size:24px;line-height:24px;color:#000;left:22.5px;">64...</div>
<div class="t" style="top:1007.48px;font-size:24px;line-height:24px;color:#000;left:-807px;width:1000px;text-align:right;">Склад</div>
<div class="t" style="top:1007.48px;font-size:24px;line-height:24px;color:#000;left:201.5px;">Создана на ...</div>
<div class="t" style="top:1007.48px;font-size:24px;line-height:24px;color:#000;left:364px;">962</div>
<div class="t" style="top:1005.31px;font-size:26.5px;line-height:26.5px;color:#000;font-weight:bold;letter-spacing:1.8px;font-family:'Liberation Serif',serif;left:-362.20000000000005px;width:1000px;text-align:right;">1,00</div>
<div class="t" style="top:1007.48px;font-size:24px;line-height:24px;color:#ff8a80;font-weight:bold;left:647.5px;">П</div>
<div class="t" style="top:1005.31px;font-size:26.5px;line-height:26.5px;color:#000;font-weight:bold;letter-spacing:1.8px;font-family:'Liberation Serif',serif;left:-243.20000000000005px;width:1000px;text-align:right;">26,60</div>
<div class="b" style="left:835.5px;top:1008px;width:20px;height:20px;border:1.8px solid #333;background:#fff;"></div>
<div class="t" style="top:1007.48px;font-size:24px;line-height:24px;color:#000;left:1262px;">Апт №003 пгт.Ба...</div>
<div class="t" style="top:1007.48px;font-size:24px;line-height:24px;color:#000;left:1490px;">Апт №003 ...</div>
<div class="t" style="top:1007.48px;font-size:24px;line-height:24px;color:#000;left:1655px;">Ап...</div>
<div class="t" style="top:1007.48px;font-size:24px;line-height:24px;color:#000;left:1717.5px;">В подгот...</div>
<div class="t" style="top:1007.48px;font-size:24px;line-height:24px;color:#000;left:1853px;">08.10.2024</div>
<div class="t" style="top:1045.00px;font-size:24px;line-height:24px;color:#000;left:22.5px;">64...</div>
<div class="t" style="top:1045.00px;font-size:24px;line-height:24px;color:#000;left:-807px;width:1000px;text-align:right;">Склад</div>
<div class="t" style="top:1045.00px;font-size:24px;line-height:24px;color:#000;left:201.5px;">Создана на ...</div>
<div class="t" style="top:1045.00px;font-size:24px;line-height:24px;color:#000;left:364px;">963</div>
<div class="t" style="top:1042.83px;font-size:26.5px;line-height:26.5px;color:#000;font-weight:bold;letter-spacing:1.8px;font-family:'Liberation Serif',serif;left:-362.20000000000005px;width:1000px;text-align:right;">1,00</div>
<div class="t" style="top:1045.00px;font-size:24px;line-height:24px;color:#ff8a80;font-weight:bold;left:647.5px;">П</div>
<div class="t" style="top:1042.83px;font-size:26.5px;line-height:26.5px;color:#000;font-weight:bold;letter-spacing:1.8px;font-family:'Liberation Serif',serif;left:-243.20000000000005px;width:1000px;text-align:right;">26,60</div>
<div class="b" style="left:835.5px;top:1046px;width:20px;height:20px;border:1.8px solid #333;background:#fff;"></div>
<div class="t" style="top:1045.00px;font-size:24px;line-height:24px;color:#000;left:1262px;">Апт №003 пгт.Ба...</div>
<div class="t" style="top:1045.00px;font-size:24px;line-height:24px;color:#000;left:1490px;">Апт №003 ...</div>
<div class="t" style="top:1045.00px;font-size:24px;line-height:24px;color:#000;left:1655px;">Ап...</div>
<div class="t" style="top:1045.00px;font-size:24px;line-height:24px;color:#000;left:1717.5px;">В подгот...</div>
<div class="t" style="top:1045.00px;font-size:24px;line-height:24px;color:#000;left:1853px;">08.10.2024</div>
<div class="t" style="top:1082.52px;font-size:24px;line-height:24px;color:#000;left:22.5px;">64...</div>
<div class="t" style="top:1082.52px;font-size:24px;line-height:24px;color:#000;left:-807px;width:1000px;text-align:right;">Склад</div>
<div class="t" style="top:1082.52px;font-size:24px;line-height:24px;color:#000;left:364px;">824/955</div>
<div class="t" style="top:1080.35px;font-size:26.5px;line-height:26.5px;color:#000;font-weight:bold;letter-spacing:1.8px;font-family:'Liberation Serif',serif;left:-362.20000000000005px;width:1000px;text-align:right;">5,00</div>
<div class="t" style="top:1082.52px;font-size:24px;line-height:24px;color:#ff8a80;font-weight:bold;left:647.5px;">П</div>
<div class="t" style="top:1080.35px;font-size:26.5px;line-height:26.5px;color:#000;font-weight:bold;letter-spacing:1.8px;font-family:'Liberation Serif',serif;left:-243.20000000000005px;width:1000px;text-align:right;">182,46</div>
<div class="b" style="left:835.5px;top:1083px;width:20px;height:20px;border:1.8px solid #333;background:#fff;"></div>
<div class="t" style="top:1082.52px;font-size:24px;line-height:24px;color:#000;left:1262px;">Апт №003 пгт.Ба...</div>
<div class="t" style="top:1082.52px;font-size:24px;line-height:24px;color:#000;left:1490px;">Оптима фар...</div>
<div class="t" style="top:1082.52px;font-size:24px;line-height:24px;color:#000;left:1655px;">Ап...</div>
<div class="t" style="top:1082.52px;font-size:24px;line-height:24px;color:#000;left:1717.5px;">В подгот...</div>
<div class="t" style="top:1082.52px;font-size:24px;line-height:24px;color:#000;left:1853px;">24.09.2024</div>
<div class="t" style="top:1120.04px;font-size:24px;line-height:24px;color:#000;left:22.5px;">64...</div>
<div class="t" style="top:1120.04px;font-size:24px;line-height:24px;color:#000;left:-807px;width:1000px;text-align:right;">Склад</div>
<div class="t" style="top:1120.04px;font-size:24px;line-height:24px;color:#000;left:364px;">862/954</div>
<div class="t" style="top:1117.87px;font-size:26.5px;line-height:26.5px;color:#000;font-weight:bold;letter-spacing:1.8px;font-family:'Liberation Serif',serif;left:-362.20000000000005px;width:1000px;text-align:right;">70,00</div>
<div class="t" style="top:1120.04px;font-size:24px;line-height:24px;color:#ff8a80;font-weight:bold;left:647.5px;">П</div>
<div class="t" style="top:1117.87px;font-size:26.5px;line-height:26.5px;color:#000;font-weight:bold;letter-spacing:1.8px;font-family:'Liberation Serif',serif;left:-250.20000000000005px;width:1000px;text-align:right;">7 30..</div>
<div class="b" style="left:835.5px;top:1121px;width:20px;height:20px;border:1.8px solid #333;background:#fff;"></div>
<div class="t" style="top:1120.04px;font-size:24px;line-height:24px;color:#000;left:1262px;">Апт №003 пгт.Ба...</div>
<div class="t" style="top:1120.04px;font-size:24px;line-height:24px;color:#000;left:1490px;">Волиньфарм</div>
<div class="t" style="top:1120.04px;font-size:24px;line-height:24px;color:#000;left:1655px;">Ап...</div>
<div class="t" style="top:1120.04px;font-size:24px;line-height:24px;color:#000;left:1717.5px;">В подгот...</div>
<div class="t" style="top:1120.04px;font-size:24px;line-height:24px;color:#000;left:1853px;">24.09.2024</div>
<div class="t" style="top:1081.25px;font-size:26.5px;line-height:26.5px;color:#000;font-weight:bold;letter-spacing:1.8px;font-family:'Liberation Serif',serif;left:2152px;">1</div>
<div class="t" style="top:1118.77px;font-size:26.5px;line-height:26.5px;color:#000;font-weight:bold;letter-spacing:1.8px;font-family:'Liberation Serif',serif;left:2132px;">7 0</div>
<svg style="left:5.7px;top:600.2px" width="8" height="14" viewBox="0 0 8 14"><path d="M0 0 L7.8 6.75 L0 13.5 Z" fill="#111"/></svg>
<div class="b" style="left:0;top:286px;width:2159px;height:2px;background:#b3b3b3;"></div>
<div class="b" style="left:0;top:324px;width:2159px;height:2px;background:#b3b3b3;"></div>
<div class="b" style="left:0;top:361px;width:2159px;height:2px;background:#b3b3b3;"></div>
<div class="b" style="left:0;top:399px;width:2159px;height:2px;background:#b3b3b3;"></div>
<div class="b" style="left:0;top:436px;width:2159px;height:2px;background:#b3b3b3;"></div>
<div class="b" style="left:0;top:474px;width:2159px;height:2px;background:#b3b3b3;"></div>
<div class="b" style="left:0;top:511px;width:2159px;height:2px;background:#b3b3b3;"></div>
<div class="b" style="left:0;top:549px;width:2159px;height:2px;background:#b3b3b3;"></div>
<div class="b" style="left:0;top:586px;width:2159px;height:2px;background:#b3b3b3;"></div>
<div class="b" style="left:0;top:624px;width:2159px;height:2px;background:#b3b3b3;"></div>
<div class="b" style="left:0;top:661px;width:2159px;height:2px;background:#b3b3b3;"></div>
<div class="b" style="left:0;top:699px;width:2159px;height:2px;background:#b3b3b3;"></div>
<div class="b" style="left:0;top:736px;width:2159px;height:2px;background:#b3b3b3;"></div>
<div class="b" style="left:0;top:774px;width:2159px;height:2px;background:#b3b3b3;"></div>
<div class="b" style="left:0;top:811px;width:2159px;height:2px;background:#b3b3b3;"></div>
<div class="b" style="left:0;top:849px;width:2159px;height:2px;background:#b3b3b3;"></div>
<div class="b" style="left:0;top:886px;width:2159px;height:2px;background:#b3b3b3;"></div>
<div class="b" style="left:0;top:924px;width:2159px;height:2px;background:#b3b3b3;"></div>
<div class="b" style="left:0;top:961px;width:2159px;height:2px;background:#b3b3b3;"></div>
<div class="b" style="left:0;top:999px;width:2159px;height:2px;background:#b3b3b3;"></div>
<div class="b" style="left:0;top:1036px;width:2159px;height:2px;background:#b3b3b3;"></div>
<div class="b" style="left:0;top:1074px;width:2159px;height:2px;background:#b3b3b3;"></div>
<div class="b" style="left:0;top:1112px;width:2159px;height:2px;background:#b3b3b3;"></div>
<div class="b" style="left:0;top:1149px;width:2159px;height:2px;background:#b3b3b3;"></div>
<div class="b" style="left:16px;top:251px;width:2px;height:899px;background:#b3b3b3;"></div>
<div class="b" style="left:79px;top:251px;width:2px;height:899px;background:#b3b3b3;"></div>
<div class="b" style="left:196px;top:251px;width:2px;height:899px;background:#b3b3b3;"></div>
<div class="b" style="left:359px;top:251px;width:2px;height:899px;background:#b3b3b3;"></div>
<div class="b" style="left:499px;top:251px;width:2px;height:899px;background:#b3b3b3;"></div>
<div class="b" style="left:639px;top:251px;width:2px;height:899px;background:#b3b3b3;"></div>
<div class="b" style="left:669px;top:251px;width:2px;height:899px;background:#b3b3b3;"></div>
<div class="b" style="left:759px;top:251px;width:2px;height:899px;background:#b3b3b3;"></div>
<div class="b" style="left:931px;top:251px;width:2px;height:899px;background:#b3b3b3;"></div>
<div class="b" style="left:1108px;top:251px;width:2px;height:899px;background:#b3b3b3;"></div>
<div class="b" style="left:1256px;top:251px;width:2px;height:899px;background:#b3b3b3;"></div>
<div class="b" style="left:1484px;top:251px;width:2px;height:899px;background:#b3b3b3;"></div>
<div class="b" style="left:1649px;top:251px;width:2px;height:899px;background:#b3b3b3;"></div>
<div class="b" style="left:1712px;top:251px;width:2px;height:899px;background:#b3b3b3;"></div>
<div class="b" style="left:1847px;top:251px;width:2px;height:899px;background:#b3b3b3;"></div>
<div class="b" style="left:2010px;top:251px;width:2px;height:899px;background:#b3b3b3;"></div>
<div class="b" style="left:0px;top:1183px;width:2159px;height:2.5px;background:#9e9e9e;"></div>
<div class="b" style="left:0px;top:1185.5px;width:2159px;height:70px;background:#f0f0f0;"></div>
<div class="b" style="left:16.5px;top:1185px;width:1.5px;height:70px;background:#a3a3a3;"></div>
<div class="b" style="left:363px;top:1187px;width:136px;height:65px;background:#e6e9eb;border:1px solid #dadcde;"></div>
<div class="t" style="top:1194.68px;font-size:24px;line-height:24px;color:#000;left:367px;">Запис 10 з</div>
<div class="t" style="top:1223.48px;font-size:24px;line-height:24px;color:#000;left:367px;">24</div>
<div class="b" style="left:672px;top:1187px;width:87px;height:65px;background:#e6e9eb;border:1px solid #dadcde;"></div>
<div class="t" style="top:1193.01px;font-size:26.5px;line-height:26.5px;color:#000;font-weight:bold;letter-spacing:1.5px;font-family:'Liberation Serif',serif;left:-244.5px;width:1000px;text-align:right;">7 548,</div>
<div class="t" style="top:1221.41px;font-size:26.5px;line-height:26.5px;color:#000;font-weight:bold;letter-spacing:1.5px;font-family:'Liberation Serif',serif;left:-244.5px;width:1000px;text-align:right;">5100</div>
<div class="b" style="left:2014px;top:1187px;width:150px;height:65px;background:#e6e9eb;border:1px solid #dadcde;"></div>
<div class="t" style="top:1207.81px;font-size:26.5px;line-height:26.5px;color:#000;font-weight:bold;letter-spacing:1.5px;font-family:'Liberation Serif',serif;left:2098px;">7 328</div>
<div class="b" style="left:0px;top:1254.5px;width:2159px;height:1.5px;background:#c2c2c2;"></div>
<div class="b" style="left:0px;top:1256px;width:2159px;height:1px;background:#f8f8f8;"></div>
<div class="b" style="left:0px;top:1256px;width:2159px;height:25px;background:#f0f0f0;"></div>
<div class="b" style="left:26px;top:1257.8px;width:1346px;height:22px;background:#cdcdcd;"></div>
<svg style="left:7px;top:1262px" width="10" height="12" viewBox="0 0 10 12"><path d="M8 1 L3 6 L8 11" stroke="#555" stroke-width="2" fill="none"/></svg>
<svg style="left:2141px;top:1262px" width="10" height="12" viewBox="0 0 10 12"><path d="M2 1 L7 6 L2 11" stroke="#555" stroke-width="2" fill="none"/></svg>
<div class="b" style="left:5px;top:1285px;width:186px;height:34px;background:#f0f0f0;border:1.5px solid #1a1a1a;"></div>
<div class="t" style="top:1293.53px;font-size:16.5px;line-height:16.5px;color:#111;left:9px;">Головна</div>
<div class="b" style="left:196px;top:1285px;width:186px;height:34px;background:#fecb9e;border:1.5px solid #2f8ef0;"></div>
<div class="t" style="top:1293.53px;font-size:16.5px;line-height:16.5px;color:#111;left:199px;">Список: Заявки пост ...</div>
<div class="b" style="left:513px;top:284px;width:712px;height:648px;background:#f0f0f0;"></div>
<div class="b" style="left:513px;top:284px;width:712px;height:40px;background:#fff;"></div>
<div class="b" style="left:513px;top:324px;width:586px;height:32px;background:#fff;"></div>
<div class="t" style="top:297.93px;font-size:17.8px;line-height:17.8px;color:#000;left:519.2px;">Заголовок заявки постачальникам (новий запис)</div>
<svg style="left:1190px;top:297px" width="17" height="16" viewBox="0 0 17 16">
<path d="M1.3 0.8 L15.7 14.8 M15.7 0.8 L1.3 14.8" stroke="#111" stroke-width="1.2"/>
</svg>
<div class="b" style="left:516px;top:355px;width:583px;height:2.2px;background:#222;"></div>
<div class="b" style="left:522px;top:327px;width:81px;height:30px;background:#f0f0f0;border:1.5px solid #222;border-bottom:none;"></div>
<div class="b" style="left:525px;top:330px;width:75px;height:25px;border:1px dotted #333;"></div>
<div class="t" style="top:335.03px;font-size:16.5px;line-height:16.5px;color:#000;left:527px;">Загальні</div>
<div class="t" style="top:335.03px;font-size:16.5px;line-height:16.5px;color:#000;left:607.4px;">Округлення</div>
<div class="b" style="left:1110px;top:338px;width:106px;height:34px;background:#e1e1e1;border:2.5px solid #0a78d7;"></div>
<div class="t" style="top:346.03px;font-size:16.5px;line-height:16.5px;color:#000;left:161.79999999999995px;width:2000px;text-align:center;">Так</div>
<div class="b" style="left:1110px;top:386px;width:106px;height:34px;background:#e1e1e1;border:1.5px solid #adadad;"></div>
<div class="t" style="top:394.03px;font-size:16.5px;line-height:16.5px;color:#000;left:162px;width:2000px;text-align:center;">Скасувати</div>
<div class="t" style="top:364.03px;font-size:16.5px;line-height:16.5px;color:#000;left:524px;">Тип документа:</div>
<div class="t" style="top:365.53px;font-size:16.5px;line-height:16.5px;color:#000;left:915px;">Статус:</div>
<div class="b" style="left:519px;top:386px;width:277px;height:32px;background:#fff;border:1.5px solid #d9d9d9;"></div>
<div class="t" style="top:393.63px;font-size:15.8px;line-height:15.8px;color:#000;left:521px;">Заказ поставщикам</div>
<svg style="left:774px;top:398px" width="14" height="8" viewBox="0 0 14 8"><path d="M1 1 L7 7 L13 1" stroke="#999" stroke-width="1.5" fill="none"/></svg>
<div class="b" style="left:909px;top:386px;width:180px;height:32px;background:#fff;border:1.5px solid #d9d9d9;"></div>
<div class="t" style="top:393.63px;font-size:15.8px;line-height:15.8px;color:#f48a80;font-weight:bold;left:913px;">Пасивний</div>
<div class="t" style="top:419.83px;font-size:16.5px;line-height:16.5px;color:#000;left:524px;">№ документа:</div>
<div class="t" style="top:420.33px;font-size:16.5px;line-height:16.5px;color:#000;left:914px;">Дата документу:</div>
<div class="b" style="left:519px;top:441px;width:127px;height:32px;background:#fff;border:1.5px solid #7a7a7a;"></div>
<div class="t" style="top:448.63px;font-size:15.8px;line-height:15.8px;color:#000;left:521px;">981</div>
<div class="t" style="top:449.03px;font-size:16.5px;line-height:16.5px;color:#000;left:652px;">/</div>
<div class="b" style="left:663px;top:441px;width:133px;height:32px;background:#fff;border:1.5px solid #7a7a7a;"></div>
<div class="b" style="left:907px;top:441px;width:182px;height:32px;background:#fff;border:1.5px solid #7a7a7a;"></div>
<div class="t" style="top:448.63px;font-size:15.8px;line-height:15.8px;color:#000;letter-spacing:0.6px;left:911px;">24.11.2025</div>
<svg style="left:1068px;top:453px" width="14" height="8" viewBox="0 0 14 8"><path d="M1 1 L7 7 L13 1" stroke="#333" stroke-width="1.5" fill="none"/></svg>
<div class="t" style="top:475.33px;font-size:16.5px;line-height:16.5px;color:#000;left:523px;">Вид оплати:</div>
<div class="t" style="top:475.33px;font-size:16.5px;line-height:16.5px;color:#000;left:914px;">Дата обліку:</div>
<div class="b" style="left:519px;top:495px;width:277px;height:32px;background:#fff;border:1.5px solid #7a7a7a;"></div>
<svg style="left:775px;top:507px" width="14" height="8" viewBox="0 0 14 8"><path d="M1 1 L7 7 L13 1" stroke="#333" stroke-width="1.5" fill="none"/></svg>
<div class="b" style="left:909px;top:495px;width:180px;height:32px;background:#fff;border:1.5px solid #7a7a7a;"></div>
<div class="t" style="top:502.63px;font-size:15.8px;line-height:15.8px;color:#000;letter-spacing:0.6px;left:913px;">24.11.2025</div>
<svg style="left:1068px;top:507px" width="14" height="8" viewBox="0 0 14 8"><path d="M1 1 L7 7 L13 1" stroke="#333" stroke-width="1.5" fill="none"/></svg>
<div class="t" style="top:532.03px;font-size:16.5px;line-height:16.5px;color:#000;left:523px;">Власник:</div>
<div class="t" style="top:532.30px;font-size:15px;line-height:15px;color:#f08080;left:604.5px;">*</div>
<div class="b" style="left:519px;top:549px;width:570px;height:32px;background:#fff;border:1.5px solid #7a7a7a;"></div>
<div class="t" style="top:556.46px;font-size:16px;line-height:16px;color:#000;left:522px;">Апт №003 пгт.Барышевка, ул.Киевский шлях,126а</div>
<div class="b" style="left:1063px;top:552px;width:23px;height:26px;background:#e1e1e1;border:1px solid #adadad;"></div>
<div class="t" style="top:556.84px;font-size:12px;line-height:12px;color:#333;left:74.5px;width:2000px;text-align:center;">...</div>
<div class="t" style="top:588.53px;font-size:16.5px;line-height:16.5px;color:#000;left:524px;">Контрагент:</div>
<div class="t" style="top:588.30px;font-size:15px;line-height:15px;color:#f08080;left:622.5px;">*</div>
<div class="b" style="left:519px;top:605px;width:570px;height:32px;background:#fff;border:1.5px solid #7a7a7a;"></div>
<div class="b" style="left:1063px;top:608px;width:23px;height:26px;background:#e1e1e1;border:1px solid #adadad;"></div>
<div class="t" style="top:612.84px;font-size:12px;line-height:12px;color:#333;left:74.5px;width:2000px;text-align:center;">...</div>
<div class="t" style="top:641.03px;font-size:16.5px;line-height:16.5px;color:#000;left:524px;">Вантажоодержувач:</div>
<div class="b" style="left:517px;top:660px;width:572px;height:32px;background:#fff;border:1.5px solid #7a7a7a;"></div>
<div class="b" style="left:1038px;top:663px;width:23px;height:26px;background:#e1e1e1;border:1px solid #adadad;"></div>
<div class="t" style="top:667.84px;font-size:12px;line-height:12px;color:#333;left:49.5px;width:2000px;text-align:center;">...</div>
<div class="b" style="left:1063px;top:663px;width:23px;height:26px;background:#e1e1e1;border:1px solid #adadad;"></div>
<div class="t" style="top:671.30px;font-size:15px;line-height:15px;color:#111;left:74.5px;width:2000px;text-align:center;">X</div>
<div class="t" style="top:697.03px;font-size:16.5px;line-height:16.5px;color:#000;left:524px;">Сума:</div>
<div class="t" style="top:697.03px;font-size:16.5px;line-height:16.5px;color:#000;left:709.5px;">Відсоток знижки:</div>
<div class="t" style="top:697.03px;font-size:16.5px;line-height:16.5px;color:#000;left:900.5px;">Сума знижки:</div>
<div class="b" style="left:519px;top:717px;width:181px;height:32px;background:#fff;border:1.5px solid #7a7a7a;"></div>
<div class="b" style="left:706px;top:717px;width:182px;height:32px;background:#fff;border:1.5px solid #7a7a7a;"></div>
<div class="b" style="left:895px;top:717px;width:194px;height:32px;background:#fff;border:1.5px solid #7a7a7a;"></div>
<div class="b" style="left:524px;top:754px;width:20px;height:19px;background:#fff;border:1.5px solid #333;"></div>
<div class="t" style="top:756.03px;font-size:16.5px;line-height:16.5px;color:#000;left:548px;">Під замовлення</div>
<div class="b" style="left:688px;top:754px;width:20px;height:19px;background:#fff;border:1.5px solid #333;"></div>
<div class="t" style="top:756.03px;font-size:16.5px;line-height:16.5px;color:#000;left:711px;">Формирование прайс-листа для сайта заказов</div>
<div class="t" style="top:790.03px;font-size:16.5px;line-height:16.5px;color:#000;left:516px;">Цінова умова:</div>
<div class="b" style="left:664.5px;top:781px;width:422px;height:31px;background:#fdfdfd;border:1.5px solid #e0e0e0;"></div>
<svg style="left:1066px;top:792px" width="14" height="8" viewBox="0 0 14 8"><path d="M1 1 L7 7 L13 1" stroke="#aaa" stroke-width="1.5" fill="none"/></svg>
<div class="b" style="left:519px;top:817px;width:100px;height:12px;overflow:hidden;"><div class="t" style="left:1px;top:-6.47px;font-size:16.5px;line-height:16.5px;color:#000;">Примітка:</div></div>
<div class="b" style="left:522px;top:829px;width:694px;height:31px;background:#fff;border:1.5px solid #7a7a7a;"></div>
<div class="b" style="left:522px;top:869px;width:694px;height:57px;border:1px solid #dcdcdc;"></div>
<div class="b" style="left:530px;top:862px;width:126px;height:14px;background:#f0f0f0;"></div>
<div class="t" style="top:862.53px;font-size:16.5px;line-height:16.5px;color:#000;left:533px;">Запис створено:</div>
<div class="t" style="top:891.03px;font-size:16.5px;line-height:16.5px;color:#000;left:533px;">Автор:</div>
<div class="b" style="left:589.5px;top:884px;width:165px;height:31px;background:#fff;border:1.5px solid #7a7a7a;"></div>
<div class="t" style="top:891.63px;font-size:15.8px;line-height:15.8px;color:#000;left:593px;">GIFT</div>
<div class="t" style="top:891.03px;font-size:16.5px;line-height:16.5px;color:#000;left:765px;">Дата:</div>
<div class="b" style="left:814px;top:884px;width:189px;height:31px;background:#fff;border:1.5px solid #dadada;"></div>
<div class="t" style="top:891.63px;font-size:15.8px;line-height:15.8px;color:#000;letter-spacing:0.3px;left:818px;">24.11.2025 11:40:10</div>
<div class="b" style="left:512px;top:283px;width:714px;height:653.2px;border:4.2px solid #ff0000;border-radius:2px;"></div>
<svg style="left:0;top:0" width="2159" height="400" viewBox="0 0 2159 400">
<path d="M632.15 70.99 L631.85 69.01 L118.48 143.24 L119.52 150.16 Z" fill="#f60000"/>
<path d="M129.8 137.4 L119.2 146.7 L131.8 151.6" stroke="#f60000" stroke-width="4.8" stroke-linecap="round" stroke-linejoin="miter" stroke-miterlimit="10" fill="none"/>
</svg>
</body></html>
